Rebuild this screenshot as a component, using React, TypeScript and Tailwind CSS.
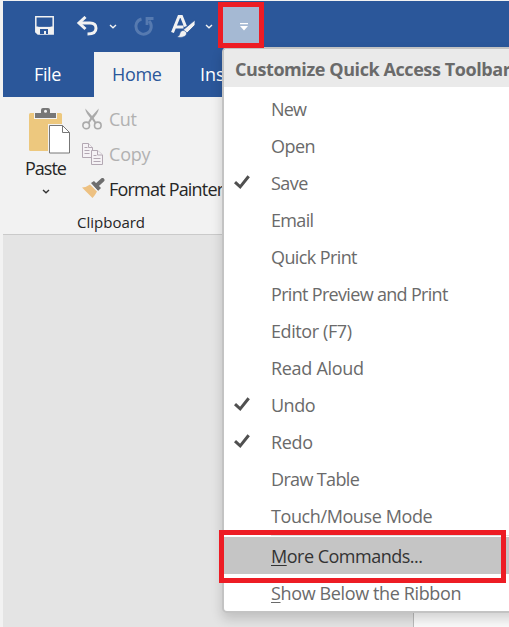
type Item = { label: string; track: string; checked?: boolean };

const items: Item[] = [
  { label: 'New', track: 'tracking-[-0.8px]' },
  { label: 'Open', track: 'tracking-[-0.5px]' },
  { label: 'Save', track: 'tracking-[-0.5px]', checked: true },
  { label: 'Email', track: 'tracking-[-0.65px]' },
  { label: 'Quick Print', track: 'tracking-[-0.6px]' },
  { label: 'Print Preview and Print', track: 'tracking-[-0.68px]' },
  { label: 'Editor (F7)', track: 'tracking-[-0.4px]' },
  { label: 'Read Aloud', track: 'tracking-[-0.3px]' },
  { label: 'Undo', track: 'tracking-[-0.5px]', checked: true },
  { label: 'Redo', track: 'tracking-[-0.35px]', checked: true },
  { label: 'Draw Table', track: 'tracking-[-0.65px]' },
  { label: 'Touch/Mouse Mode', track: 'tracking-[-0.4px]' },
];

function SaveIcon() {
  return (
    <svg className="ml-8 h-5 w-5 shrink-0" viewBox="0 0 20 20" fill="none">
      <path d="M.8.800h17.400v17.200H3L.8 16z" stroke="#f2f2f2" strokeWidth="1.500" />
      <path d="M1 10.500h17V18H3l-2-2z" fill="#f2f2f2" />
      <path d="M5 18v-5h8v5h-2v-3H9v3z" fill="#2b579a" />
      <path d="M2 8l1.500 2.800h12L17 8z" fill="#2b579a" />
    </svg>
  );
}

function UndoIcon() {
  return (
    <svg className="ml-[21px] h-5 w-[22px] shrink-0" viewBox="0 0 22 20" fill="none" stroke="#f2f2f2">
      <path d="M3 7h11c4 0 6 2.200 6 5.200 0 3.800-3.300 5.800-8.500 5.800" strokeWidth="3" />
      <path d="M9.500 1L3 7l6.500 6" strokeWidth="3" />
    </svg>
  );
}

function Chevron({ className, stroke }: { className: string; stroke: string }) {
  return (
    <svg className={className} viewBox="0 0 8 5" fill="none" stroke={stroke} strokeWidth="1.4">
      <path d="M1 1l3 2.700L7 1" />
    </svg>
  );
}

function RedoIcon() {
  return (
    <svg className="ml-[16px] h-[22px] w-[22px] shrink-0" viewBox="0 0 22 22" fill="none" stroke="#567ab0">
      <path d="M8.500 4A7.700 7.700 0 1 0 16 6" strokeWidth="3" />
      <path d="M20.500 3.500H14V10" strokeWidth="2.800" />
    </svg>
  );
}

function StylesIcon() {
  return (
    <svg className="ml-4 h-6 w-6 shrink-0" viewBox="0 0 24 24">
      <path d="M1.500 18.500L8 2.500h2.500l4 10M4.500 13h8" fill="none" stroke="#f2f2f2" strokeWidth="3" />
      <path d="M24 6v5l-8 8-4-3z" fill="#f2f2f2" stroke="#2b579a" strokeWidth=".8" />
      <path d="M12 16.500c2 0 4 1.500 3.500 3.500-.7 3-5.500 4-9.500 3 2-1 2.500-2 3-4 .5-1.500 1.500-2.500 3-2.500z" fill="#f2f2f2" stroke="#2b579a" strokeWidth=".6" />
    </svg>
  );
}

function PasteIcon() {
  return (
    <svg className="ml-[26px] h-[46px] w-[42px]" viewBox="0 0 42 46">
      <rect y="5" width="33" height="38" rx="1.500" fill="#edc87e" />
      <path d="M5 5h23v6H5z" fill="#f2f2f2" />
      <path d="M6 5h6V2q0-2 2-2h5q2 0 2 2v3h6v5H6z" fill="#777" />
      <circle cx="16.500" cy="3.200" r="1.500" fill="#f2f2f2" />
      <path d="M19 16h15l8 8v22H19z" fill="#f2f2f2" />
      <path d="M20.500 17.500h13l7 7v20.500h-20z" fill="white" stroke="#777" />
      <path d="M33.500 17.500v7h7" fill="none" stroke="#777" />
    </svg>
  );
}

function CutIcon() {
  return (
    <svg className="h-[22px] w-5 shrink-0" viewBox="0 0 20 22" fill="none" stroke="#aaa">
      <path d="M3.300.500q0 3 2 5.500l3 4-2.300 4 1.500 1L10 11.500l2.500 3.500 1.500-1-2.300-4 3-4q2-2.500 2-5.500L10 8z" fill="#aaa" stroke="none" />
      <circle cx="4.200" cy="17.400" r="3.300" strokeWidth="1.600" />
      <circle cx="15.800" cy="17.400" r="3.300" strokeWidth="1.600" />
    </svg>
  );
}

function CopyIcon() {
  return (
    <svg className="h-[22px] w-[21px] shrink-0" viewBox="0 0 21 22" fill="#f5f2f5" stroke="#b3a8b3">
      <path d="M.5.500h6l4 4v10H.5z" />
      <path d="M6.500.500v4h4M2.500 4.500h3M2.500 7.500h5M2.500 10.500h5" />
      <path d="M9.500 7.500h6l5 4.500v9.500h-11z" />
      <path d="M15.500 7.500v4.500h5M11.500 12.500h3M11.500 15.500h7M11.500 18.500h7" />
    </svg>
  );
}

function BrushIcon() {
  return (
    <svg className="-mt-[3px] h-5 w-[23px] shrink-0" viewBox="0 0 23 20">
      <path d="M0 9.500q4 0 8-3l7 7q-2 4-4.500 6.500z" fill="#edc182" />
      <path d="M15 7l5.500-5" stroke="#6e6e6e" strokeWidth="4" strokeLinecap="round" />
      <path d="M9 5l3-2 7 7-3 3z" fill="#6e6e6e" />
      <path d="M8.300 5.700l7.500 7.500" stroke="#f2f2f2" strokeWidth="1" />
    </svg>
  );
}

function Check() {
  return (
    <svg className="h-[15px] w-4" viewBox="0 0 16 15" fill="none">
      <path d="M1 7.200l5.200 4.700L14.700 1.300" stroke="#505050" strokeWidth="3" />
    </svg>
  );
}

function QuickMenu() {
  return (
    <div className="absolute top-[47px] left-[222px] h-[566px] w-[300px] overflow-hidden rounded-[5px] border-2 border-[#c3c3c3] bg-white text-[18px] text-[#6a6a6a] shadow-[0_6px_12px_rgba(0,0,0,0.16)]">
      <div className="flex h-[38px] items-center bg-[#eaeaea] pt-0.5 pl-[11px] font-bold whitespace-nowrap text-[#6a6a6a]">
        <span className="tracking-[-0.42px]">Customize Quick Access Toolbar</span>
      </div>
      <div className="flex flex-col pt-1">
        {items.map((item) => (
          <div key={item.label} className="flex h-[37px] items-center">
            <div className="w-[47px] pb-[3px] pl-[10px]">{item.checked && <Check />}</div>
            <span className={item.track}>{item.label}</span>
          </div>
        ))}
      </div>
      <div className="ml-[47px] h-px bg-[#e1e1e1]" />
      <div className="mt-px flex h-[37px] items-center bg-[#c5c5c5] pt-px pl-[47px] text-[#333]">
        <span className="tracking-[-0.5px]"><u className="underline-offset-2">M</u>ore Commands...</span>
      </div>
      <div className="flex h-[37px] items-center pt-px pl-[47px]">
        <span className="tracking-[-0.37px]"><u className="underline-offset-2">S</u>how Below the Ribbon</span>
      </div>
    </div>
  );
}

export default function App() {
  return (
    <div className="relative h-[627px] w-[509px] overflow-hidden bg-[#f2f2f2] pt-px pl-[3px] font-['Open_Sans','Noto_Sans',sans-serif] text-[18px]">
      <div className="flex h-[51px] items-center bg-[#2b579a] pb-px">
        <SaveIcon />
        <UndoIcon />
        <Chevron className="ml-[11px] h-[5px] w-2" stroke="#f2f2f2" />
        <RedoIcon />
        <StylesIcon />
        <Chevron className="ml-[10px] h-[5px] w-2" stroke="#f2f2f2" />
      </div>
      <div className="flex h-[45px] bg-[#2b579a] text-white">
        <div className="flex w-[91px] items-center pl-[31px] tracking-[-0.4px]">File</div>
        <div className="flex w-[86px] items-center bg-[#f2f2f2] pl-[18px] tracking-[-0.35px] text-[#2b579a]">Home</div>
        <div className="flex items-center pl-5">Insert</div>
      </div>
      <div className="flex h-[138px] border-b border-[#cacaca] text-[#262626]">
        <div className="w-[79px] pt-[11px]">
          <PasteIcon />
          <div className="mt-[2px] ml-[22px] leading-6 tracking-[-1px]">Paste</div>
          <Chevron className="mt-[9px] ml-[39px] h-[5px] w-2" stroke="#333" />
        </div>
        <div className="pt-[5px] whitespace-nowrap">
          <div className="-mt-px mb-px flex h-[35px] items-center gap-[7px] text-[#b1b1b1]"><CutIcon /><span className="pt-px tracking-[-0.5px]">Cut</span></div>
          <div className="-mt-px mb-px flex h-[35px] items-center gap-[6px] text-[#b1b1b1]"><CopyIcon /><span className="pt-px tracking-[-0.2px]">Copy</span></div>
          <div className="flex h-[35px] items-center gap-[4px]"><BrushIcon /><span className="tracking-[-0.8px]">Format Painter</span></div>
          <div className="-ml-[5px] pt-px text-[15px] leading-7">Clipboard</div>
        </div>
      </div>
      <div className="flex h-[392px] items-end bg-[#e4e4e4] pl-[410px]">
        <div className="h-[30px] w-24 border-l border-[#bbb] bg-[#fafafa]" />
      </div>
      <QuickMenu />
      <div className="absolute top-[2px] left-[218px] flex h-[46px] w-[46px] items-center justify-center border-5 border-[#ed1c24] bg-[#a5b9d3]">
        <svg className="mt-1 ml-[5px] h-2 w-2" viewBox="0 0 8 8" fill="white">
          <path d="M0 0h8v1.300H0zM0 3h8L4 7.500z" />
        </svg>
      </div>
      <div className="absolute top-[530px] left-[219px] h-[53px] w-[287px] border-5 border-[#ed1c24]" />
    </div>
  );
}
